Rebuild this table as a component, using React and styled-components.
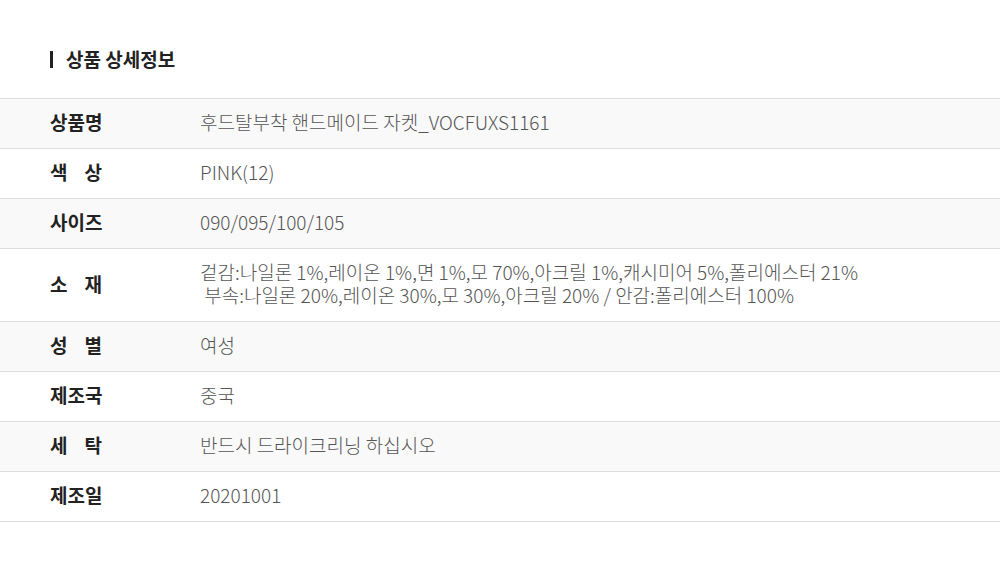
import React from "react";
import styled, { createGlobalStyle } from "styled-components";

const Global = createGlobalStyle`
  html, body { margin: 0; padding: 0; background: #fff; }
  body { font-family: "Noto Sans CJK KR", "Noto Sans", sans-serif; }
`;

const Page = styled.div`
  width: 1000px;
`;

const Heading = styled.h2`
  display: flex;
  align-items: center;
  margin: 0;
  padding: 47px 50px 0;
  height: 24px;
  margin-bottom: 27px;
  font-size: 19px;
  font-weight: 700;
  color: #222;
  line-height: 24px;
`;

const Bar = styled.span`
  display: inline-block;
  width: 3px;
  height: 17px;
  background: #222;
  margin-right: 13px;
`;

const Table = styled.div`
  border-top: 1px solid #ddd;
`;

const Row = styled.div`
  display: grid;
  grid-template-columns: 200px 1fr;
  border-bottom: 1px solid #ddd;
  background: ${(p) => (p.$shade ? "#f9f9f9" : "#fff")};
`;

const Label = styled.div`
  padding: 11px 0 15px 50px;
  display: flex;
  align-items: center;
`;

const LabelText = styled.span`
  display: inline-flex;
  justify-content: space-between;
  width: ${(p) => (p.$spread ? "52px" : "auto")};
  font-size: 19px;
  font-weight: 700;
  color: #222;
  line-height: 23px;
  white-space: nowrap;
`;

const Value = styled.div`
  padding: 11px 0 15px;
  font-size: 19px;
  font-weight: 300;
  color: #555;
  line-height: 23px;
  white-space: pre-wrap;
`;

const rows = [
  ["상품명", "후드탈부착 핸드메이드 자켓_VOCFUXS1161"],
  [["색", "상"], "PINK(12)"],
  ["사이즈", "090/095/100/105"],
  [
    ["소", "재"],
    "겉감:나일론 1%,레이온 1%,면 1%,모 70%,아크릴 1%,캐시미어 5%,폴리에스터 21%\n 부속:나일론 20%,레이온 30%,모 30%,아크릴 20% / 안감:폴리에스터 100%",
  ],
  [["성", "별"], "여성"],
  ["제조국", "중국"],
  [["세", "탁"], "반드시 드라이크리닝 하십시오"],
  ["제조일", "20201001"],
];

export default function App() {
  return (
    <Page>
      <Global />
      <Heading>
        <Bar />
        상품 상세정보
      </Heading>
      <Table>
        {rows.map(([label, value], i) => (
          <Row key={i} $shade={i % 2 === 0}>
            <Label>
              {Array.isArray(label) ? (
                <LabelText $spread>
                  <span>{label[0]}</span>
                  <span>{label[1]}</span>
                </LabelText>
              ) : (
                <LabelText>{label}</LabelText>
              )}
            </Label>
            <Value>{value}</Value>
          </Row>
        ))}
      </Table>
    </Page>
  );
}
